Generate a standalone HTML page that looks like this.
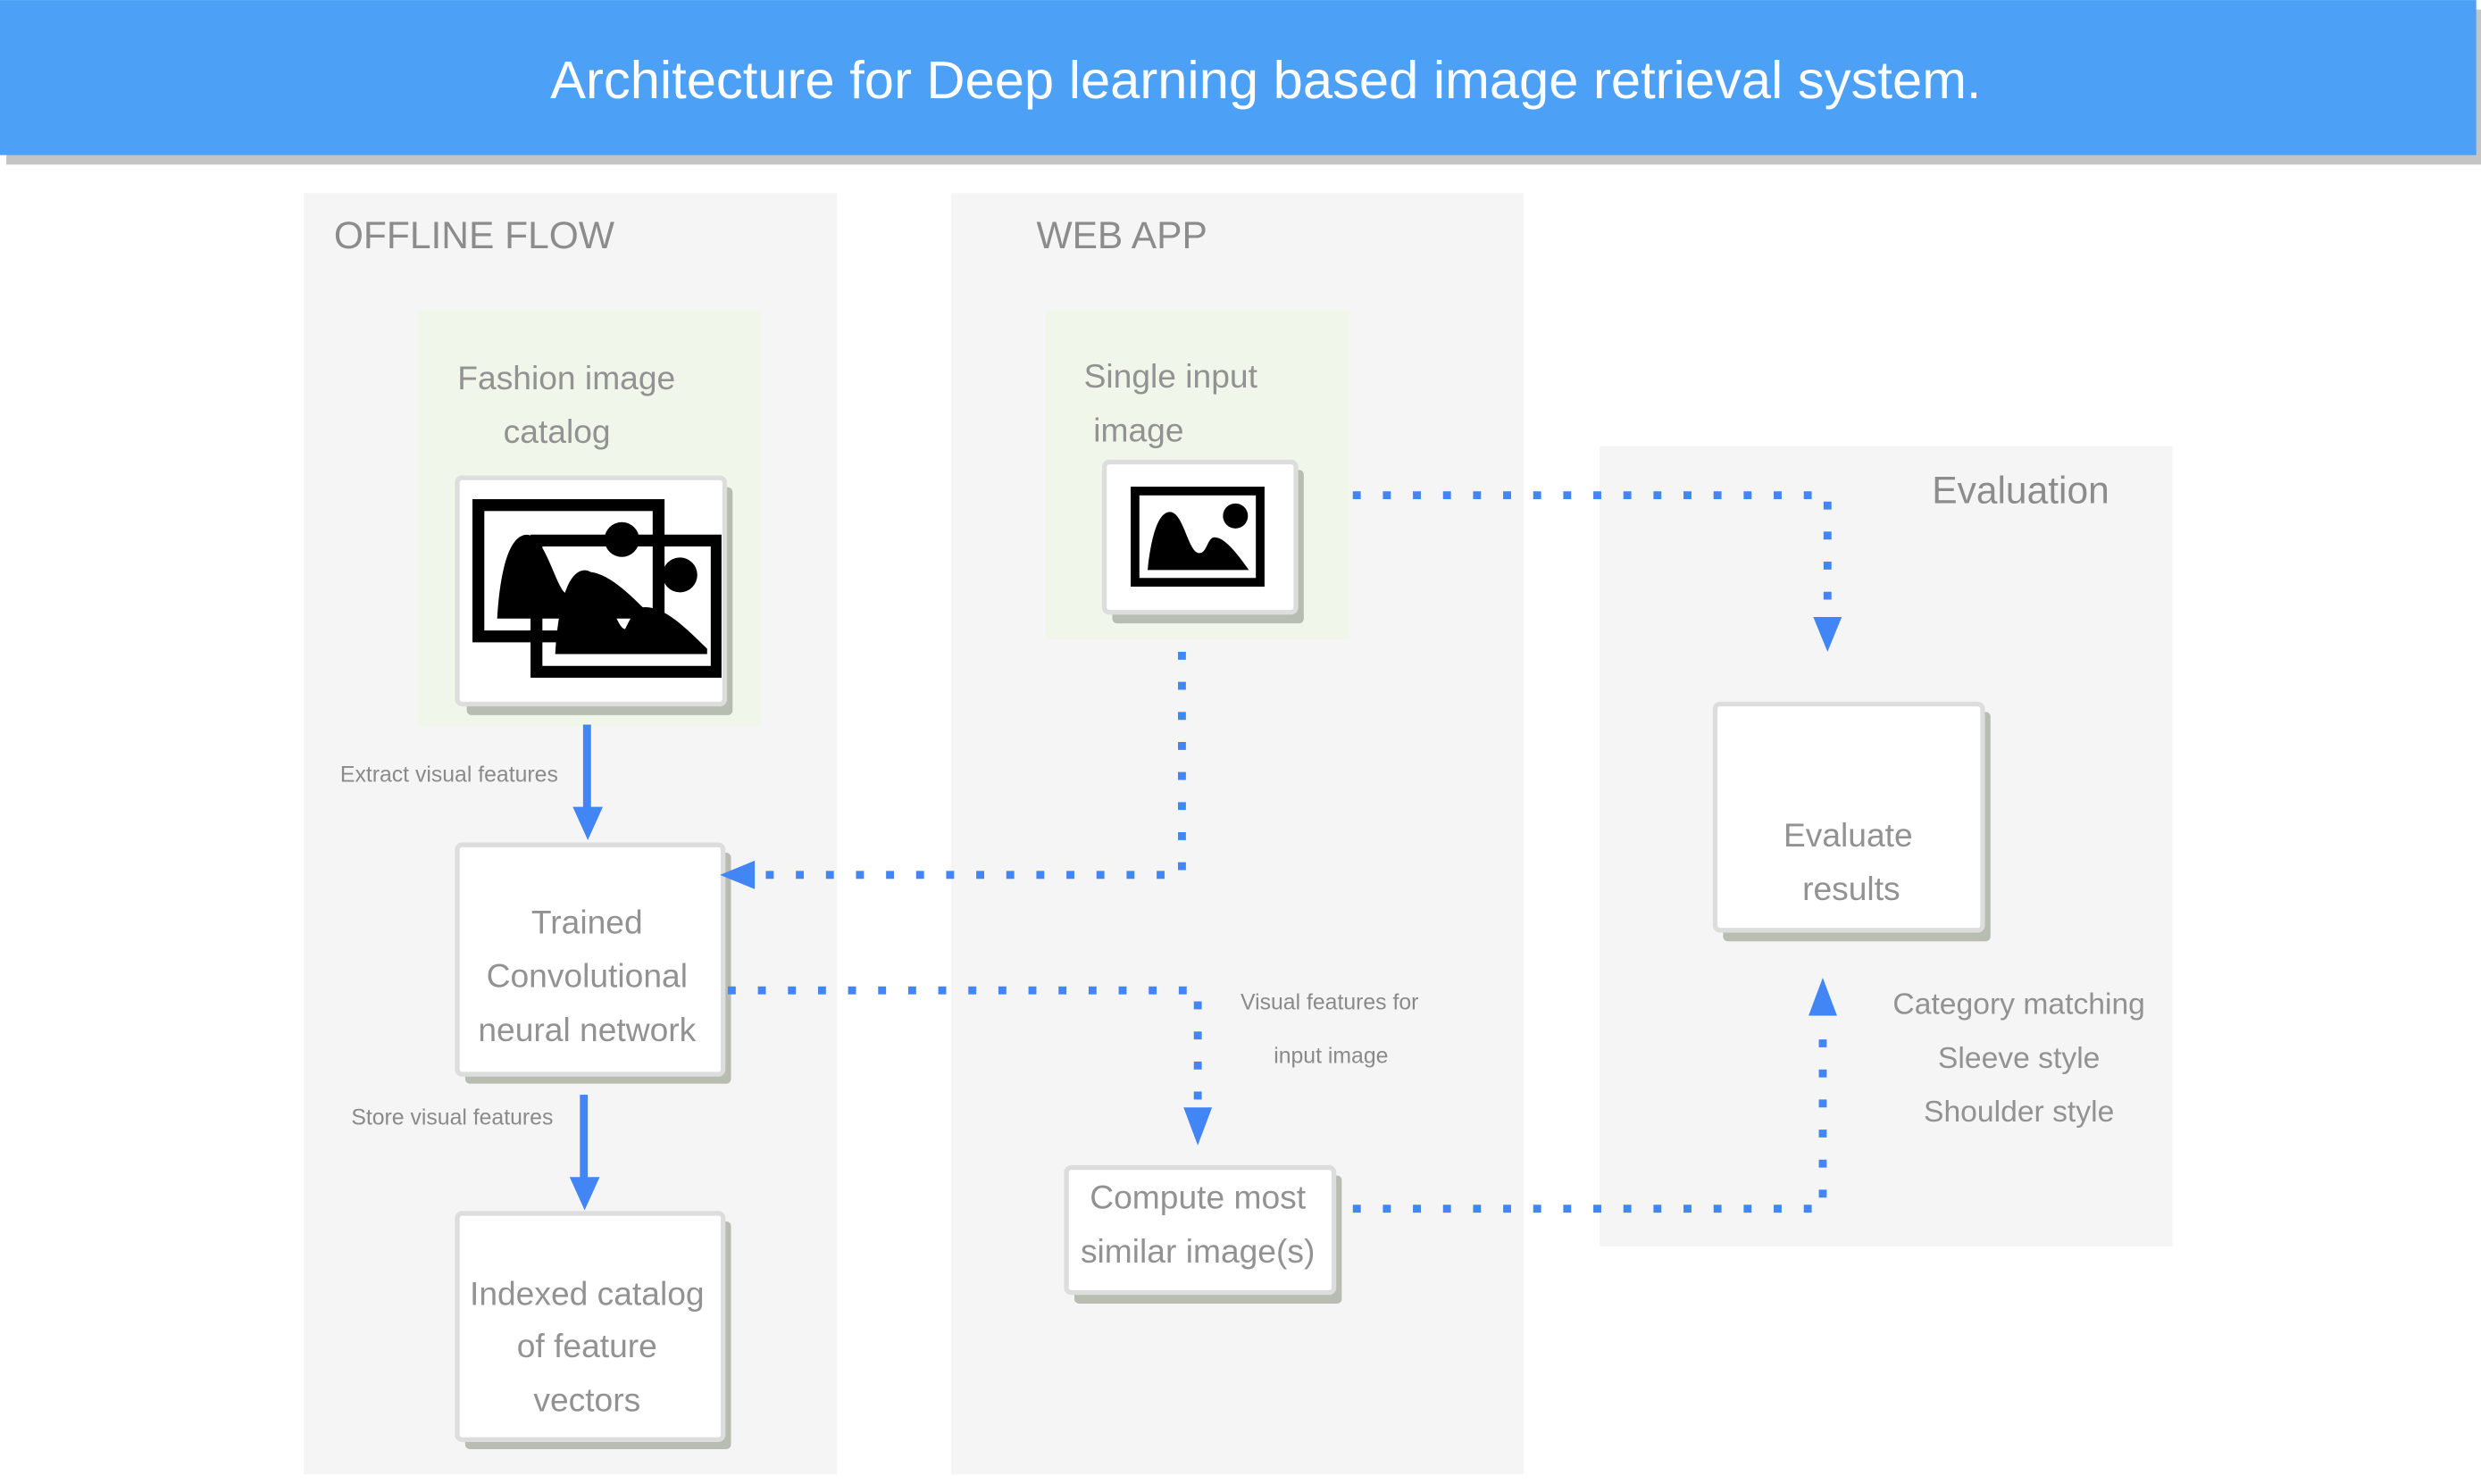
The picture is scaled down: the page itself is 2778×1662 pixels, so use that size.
<!DOCTYPE html>
<html><head><meta charset="utf-8"><style>
html,body{margin:0;padding:0;background:#fff;width:2778px;height:1662px;overflow:hidden}
svg{display:block}
text{font-family:"Liberation Sans",sans-serif}
</style></head><body>
<svg width="2778" height="1662" viewBox="0 0 1568 938" xmlns="http://www.w3.org/2000/svg">
<defs>
<clipPath id="cc"><rect x="290" y="303" width="166" height="140"/></clipPath>
</defs>
<rect width="1568" height="938" fill="#fff"/>
<rect x="4" y="6" width="1564" height="98" fill="#c4c4c4"/>
<rect x="0" y="0" width="1565" height="98" fill="#4ca0f6"/>
<text x="800" y="62" font-size="33.7" fill="#fff" text-anchor="middle">Architecture for Deep learning based image retrieval system.</text>

<rect x="192" y="122" width="337" height="810" fill="#f5f5f5"/>
<rect x="601" y="122" width="362" height="810" fill="#f5f5f5"/>
<rect x="1011" y="282" width="362" height="506" fill="#f5f5f5"/>
<g fill="#8c8c8c">
<text x="211" y="157" font-size="24">OFFLINE FLOW</text>
<text x="655" y="157" font-size="24">WEB APP</text>
<text x="1221" y="318" font-size="24">Evaluation</text>
</g>

<rect x="264" y="196" width="217" height="263" fill="#f0f6e9"/>
<rect x="661" y="196" width="192" height="208" fill="#f0f6e9"/>
<g fill="#929292" font-size="21">
<text x="358" y="246" text-anchor="middle">Fashion image</text>
<text x="352" y="280" text-anchor="middle">catalog</text>
<text x="685" y="245">Single input</text>
<text x="691" y="279">image</text>
</g>

<g>
<rect x="295" y="308" width="168" height="144" rx="3" fill="#b8bdb2"/>
<rect x="289" y="302" width="169" height="143" rx="3" fill="#fff" stroke="#ddd" stroke-width="3"/>
<rect x="703" y="297" width="121" height="97" rx="3" fill="#b8bdb2"/>
<rect x="698" y="292" width="121" height="95" rx="3" fill="#fff" stroke="#ddd" stroke-width="3"/>
<rect x="294" y="539" width="168" height="146" rx="3" fill="#b8bdb2"/>
<rect x="289" y="534" width="168" height="145" rx="3" fill="#fff" stroke="#ddd" stroke-width="3"/>
<rect x="294" y="772" width="168" height="144" rx="3" fill="#b8bdb2"/>
<rect x="289" y="767" width="168" height="143" rx="3" fill="#fff" stroke="#ddd" stroke-width="3"/>
<rect x="679" y="743" width="169" height="81" rx="3" fill="#b8bdb2"/>
<rect x="674" y="738" width="169" height="79" rx="3" fill="#fff" stroke="#ddd" stroke-width="3"/>
<rect x="1089" y="450" width="169" height="145" rx="3" fill="#b8bdb2"/>
<rect x="1084" y="445" width="169" height="143" rx="3" fill="#fff" stroke="#ddd" stroke-width="3"/>
</g>

<g clip-path="url(#cc)">
<g id="img1">
<rect x="302.35" y="319.25" width="113.9" height="83" fill="none" stroke="#000" stroke-width="7.5"/>
<circle cx="393" cy="341" r="11" fill="#000"/>
<path d="M314.2,391 C316,360 322,338 333,338 C345,338 352,375 358.4,375.2 C362,368 365,361.4 371,361.4 C385,361.4 400,378 410.2,387.6 L410.2,391 Z" fill="#000"/>
</g>
<use href="#img1" transform="translate(36.7 22.4)"/>
</g>

<g>
<rect x="717.35" y="310.35" width="79.1" height="57.7" fill="none" stroke="#000" stroke-width="5.5"/>
<circle cx="780.8" cy="326.1" r="7.9" fill="#000"/>
<path d="M725.3,360.3 C728,335 733,323.6 739.4,323.6 C748,323.6 751,349.6 757.9,349.6 C763,349.6 763,339.6 767.6,339.6 C774,339.6 782,350 789.3,360.3 Z" fill="#000"/>
</g>

<g fill="#929292" font-size="21" text-anchor="middle">
<text x="371" y="590">Trained</text>
<text x="371" y="624">Convolutional</text>
<text x="371" y="658">neural network</text>
<text x="371" y="825">Indexed catalog</text>
<text x="371" y="858">of feature</text>
<text x="371" y="892">vectors</text>
<text x="757" y="764">Compute most</text>
<text x="757" y="798">similar image(s)</text>
<text x="1168" y="535">Evaluate</text>
<text x="1170" y="569">results</text>
</g>
<g fill="#929292" font-size="19" text-anchor="middle">
<text x="1276" y="641">Category matching</text>
<text x="1276" y="675">Sleeve style</text>
<text x="1276" y="709">Shoulder style</text>
</g>
<g fill="#8a8a8a" font-size="14">
<text x="215" y="494">Extract visual features</text>
<text x="222" y="711">Store visual features</text>
<text x="784" y="638">Visual features for</text>
<text x="805" y="672">input image</text>
</g>

<g fill="#4285f4">
<rect x="368.5" y="458" width="5" height="56"/>
<path d="M362 510h19l-9.5 21z"/>
<rect x="366.5" y="692" width="5" height="56"/>
<path d="M360 744h19l-9.5 21z"/>
<path d="M455 553l22-9v18z"/>
<path d="M748 700h18l-9 24z"/>
<path d="M1146 390h18l-9 22z"/>
<path d="M1143 642h18l-9-24z"/>
</g>
<g fill="none" stroke="#4285f4" stroke-width="5" stroke-dasharray="5 14">
<path d="M747 412V553H480"/>
<path d="M460 626H757V700"/>
<path d="M855 313H1155V390"/>
<path d="M855 764H1152V645"/>
</g>
</svg>
</body></html>
